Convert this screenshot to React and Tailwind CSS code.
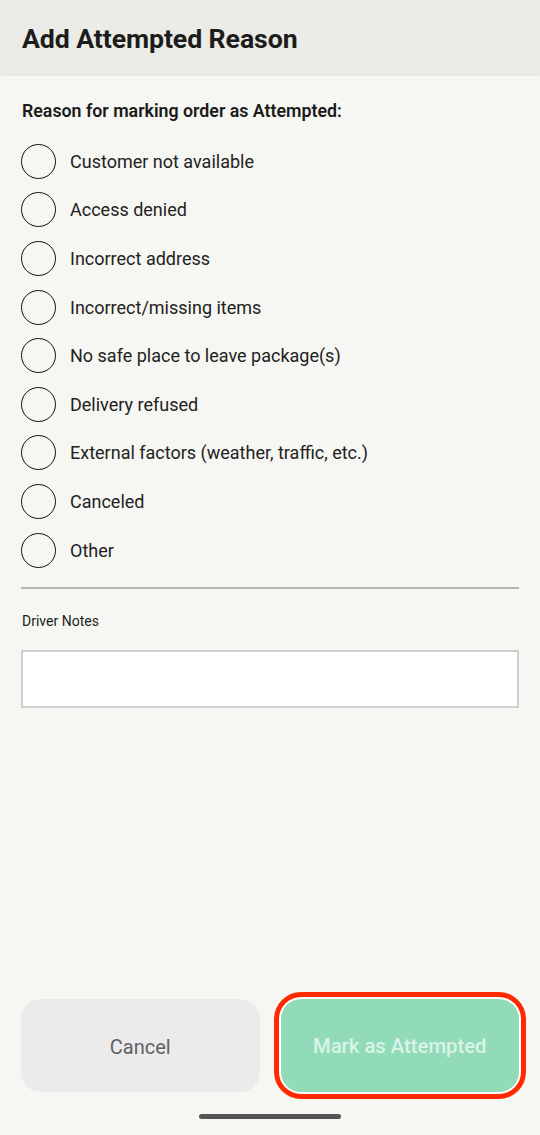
import React, { useState } from 'react';

const reasons = [
  'Customer not available',
  'Access denied',
  'Incorrect address',
  'Incorrect/missing items',
  'No safe place to leave package(s)',
  'Delivery refused',
  'External factors (weather, traffic, etc.)',
  'Canceled',
  'Other',
];

export default function App() {
  const [selected, setSelected] = useState(null);
  const [notes, setNotes] = useState('');

  return (
    <div className="h-[1135px] flex flex-col bg-[#f6f6f2] font-['Roboto',sans-serif] text-[#1b1b1b]">
      <header className="h-[74px] shrink-0 bg-[#ebebe7] flex items-center px-[22px] pt-[4px] shadow-[0_1px_2px_rgba(0,0,0,0.12)]">
        <h1 className="text-[26.7px] font-bold tracking-[-0.1px] text-[#1c1c1a]">Add Attempted Reason</h1>
      </header>

      <main className="flex-1 px-[21px] pt-[25px]">
        <p className="text-[17.8px] font-semibold leading-[24px] pl-[1px]">Reason for marking order as Attempted:</p>

        <div className="mt-[14px]">
          {reasons.map((reason) => (
            <button
              key={reason}
              onClick={() => setSelected(reason)}
              className="w-full h-[48.6px] flex items-center text-left"
            >
              <span className="w-[35px] h-[35px] rounded-full border-[1.5px] border-[#111] flex items-center justify-center shrink-0">
                {selected === reason && <span className="w-[19px] h-[19px] rounded-full bg-[#111]" />}
              </span>
              <span className="ml-[14px] text-[18px] text-[#222]">{reason}</span>
            </button>
          ))}
        </div>

        <div className="mt-[13px] h-[2px] bg-[#b4b4b0]" />

        <label className="block mt-[22px] text-[14px] text-[#222] pl-[1px]">Driver Notes</label>
        <input
          type="text"
          value={notes}
          onChange={(e) => setNotes(e.target.value)}
          className="mt-[18px] w-full h-[58px] bg-white border-2 border-[#cfcfcf] px-3 text-[16px] focus:outline-none"
        />
      </main>

      <footer className="shrink-0 px-[21px] flex gap-[21px]">
        <button className="flex-1 h-[93px] rounded-[20px] bg-[#ebebeb] text-[20px] text-[#5f6166] pt-[2px]">
          Cancel
        </button>
        <button
          disabled={!selected}
          className="flex-1 h-[93px] rounded-[20px] bg-[#92dbb9] text-[20.3px] font-medium text-[#d9f4e7] pt-[2px] shadow-[0_0_0_2px_#ffffff,0_0_0_7px_#ff2a00]"
        >
          Mark as Attempted
        </button>
      </footer>

      <div className="shrink-0 h-[43px] flex items-center justify-center">
        <div className="w-[142px] h-[5px] rounded-full bg-[#555555] mt-[5px]" />
      </div>
    </div>
  );
}
